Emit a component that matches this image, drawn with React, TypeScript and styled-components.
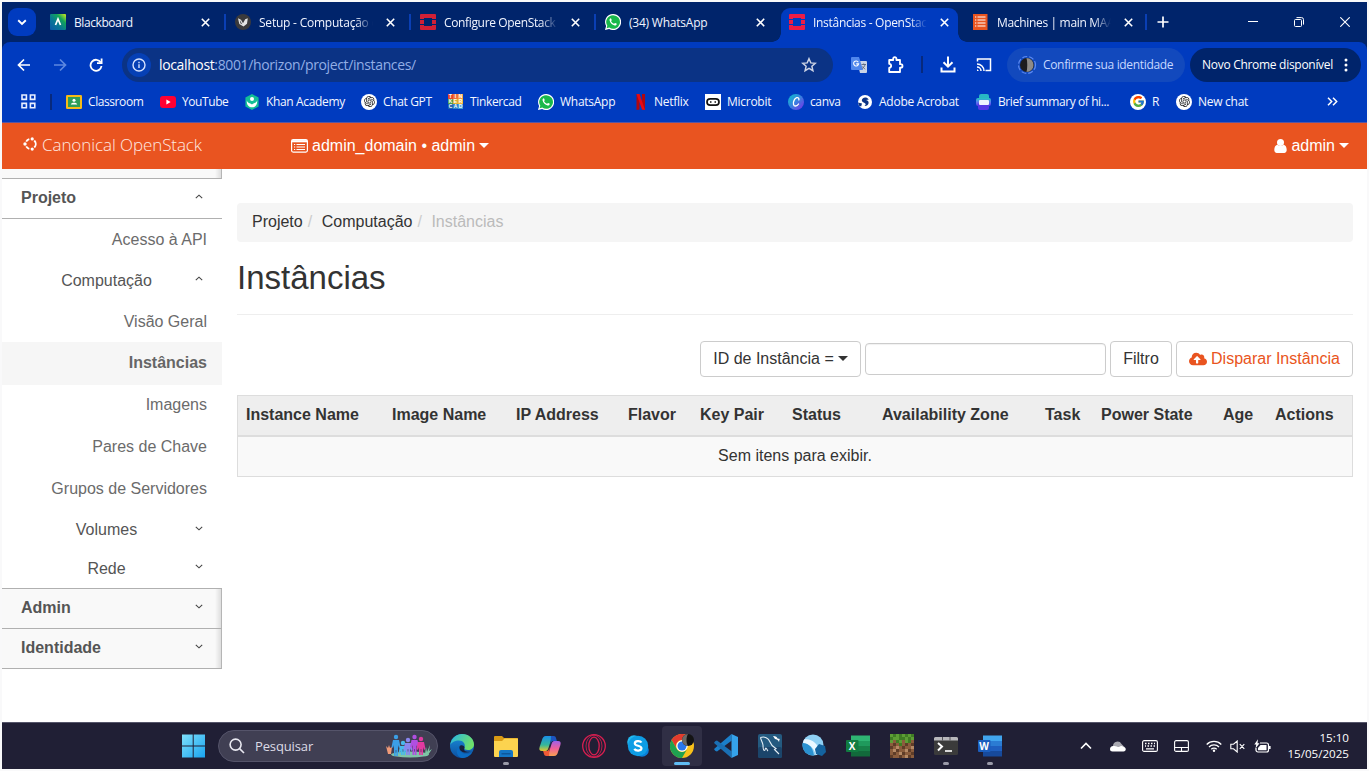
import React from 'react';
import styled, { createGlobalStyle, css } from 'styled-components';
import { RiOpenaiFill } from 'react-icons/ri';
import { FaCloudUploadAlt } from 'react-icons/fa';
import { FcGoogle } from 'react-icons/fc';

const ui = `"Open Sans", "Noto Sans", sans-serif`;
const arial = `"Liberation Sans", Arial, sans-serif`;

const GlobalStyle = createGlobalStyle`
  *, *::before, *::after { box-sizing: border-box; }
  body { margin: 0; background: #f9f9fa; overflow: hidden; }
`;

const Screen = styled.div`
  width: 1369px;
  height: 771px;
  padding: 2px;
  display: flex;
  background: #f9f9fa;
`;

const Desktop = styled.div`
  width: 1365px;
  height: 767px;
  display: flex;
  flex-direction: column;
  background: #fff;
  overflow: hidden;
`;

/* ---------- Browser chrome ---------- */

const TabStrip = styled.div`
  height: 40px;
  flex: none;
  display: flex;
  background: #00246b;
  font: 12px ${ui};
  color: #f1f5ff;
`;

const TabSearch = styled.div`
  width: 28px;
  height: 28px;
  margin: 6px 4px 0 6px;
  padding-left: 7px;
  border-radius: 9px;
  background: #003bbf;
  display: flex;
  align-items: center;
`;

const Tab = styled.div<{ $w: number; $active?: boolean; $line?: boolean }>`
  position: relative;
  width: ${p => p.$w}px;
  height: 34px;
  margin-top: 6px;
  padding: 0 0 6px 10px;
  display: flex;
  align-items: center;
  gap: 8px;
  svg { flex: none; }
  ${p => p.$line && css`
    &::after {
      content: '';
      position: absolute;
      right: -1px;
      top: 6px;
      width: 2px;
      height: 16px;
      background: #0a3fb4;
    }
  `}
  ${p => p.$active && css`
    &::before {
      content: '';
      position: absolute;
      inset: 0 5px 0 2px;
      border-radius: 9px 9px 0 0;
      background: #003bbf;
    }
    & > * { position: relative; }
  `}
`;

const Flare = styled.i<{ $side: 'left' | 'right' }>`
  && { position: absolute; }
  bottom: 0;
  width: 9px;
  height: 9px;
  ${p => p.$side === 'left' ? 'left: -7px;' : 'right: -4px;'}
  background: radial-gradient(circle at ${p => p.$side === 'left' ? '0 0' : '100% 0'}, transparent 8.5px, #003bbf 9px);
`;

const TabTitle = styled.span<{ $fade?: boolean; $track: number }>`
  width: 115px;
  flex: none;
  white-space: nowrap;
  overflow: hidden;
  letter-spacing: ${p => p.$track}px;
  ${p => p.$fade && css`
    mask-image: linear-gradient(90deg, #000 84%, transparent 99%);
  `}
`;

const CloseIcon = styled.svg.attrs({ viewBox: '0 0 9 9', width: 9, height: 9 })`
  margin-left: 4px;
  stroke: #fff;
  stroke-width: 1.6;
`;

const StripButtons = styled.div`
  flex: 1;
  display: flex;
  align-items: center;
  justify-content: space-between;
  padding: 0 17px 0 11px;
`;

const WindowButtons = styled.div`
  display: flex;
  align-items: center;
  gap: 36px;
`;

const Toolbar = styled.div`
  height: 45px;
  flex: none;
  display: flex;
  align-items: center;
  background: #003bbf;
  padding: 0 6px 0 15px;
  border-radius: 8px 8px 0 0;
  font: 12px ${ui};
`;

const ToolbarWrap = styled.div`
  background: #00246b;
  flex: none;
`;

const NavButtons = styled.div`
  width: 105px;
  display: flex;
  align-items: center;
  gap: 22px;
`;

const UrlBar = styled.div`
  width: 711px;
  height: 34px;
  border-radius: 17px;
  background: #0b3385;
  display: flex;
  align-items: center;
  padding: 0 16px 0 5px;
  font-size: 14px;
  color: #92aee6;
  b { font-weight: 400; color: #fff; }
`;

const InfoDot = styled.div`
  width: 24px;
  height: 24px;
  border-radius: 50%;
  background: #0640b5;
  display: grid;
  place-items: center;
  margin-right: 8px;
`;

const UrlText = styled.span`
  flex: 1;
  letter-spacing: -0.37px;
`;

const ToolIcons = styled.div`
  width: 174px;
  padding-left: 18px;
  display: flex;
  align-items: center;
`;

const ToolIcon = styled.span<{ $w: number }>`
  width: ${p => p.$w}px;
  flex: none;
  display: flex;
`;

const ProfilePill = styled.div`
  width: 178px;
  height: 34px;
  border-radius: 17px;
  background: #1249bd;
  color: #c7d8ff;
  display: flex;
  align-items: center;
  gap: 6px;
  padding-left: 10px;
  white-space: nowrap;
  letter-spacing: -0.33px;
`;

const UpdatePill = styled.div`
  width: 171px;
  height: 34px;
  margin-left: 5px;
  border-radius: 17px;
  background: #00246b;
  color: #fff;
  display: flex;
  align-items: center;
  justify-content: space-between;
  padding: 0 13px 0 12px;
  white-space: nowrap;
  letter-spacing: -0.29px;
`;

const BookmarkBar = styled.div`
  height: 36px;
  flex: none;
  background: #003bbf;
  border-bottom: 1px solid #5a55a0;
  display: flex;
  align-items: center;
  padding: 0 0 6px 19px;
  color: #f4f7ff;
  font: 12px ${ui};
`;

const AppsButton = styled.div`
  width: 45px;
  display: flex;
  align-items: center;
  gap: 14px;
`;

const Divider = styled.i<{ $h: number }>`
  width: 2px;
  height: ${p => p.$h}px;
  background: #07297d;
`;

const Bookmark = styled.div<{ $w: number; $track: number }>`
  width: ${p => p.$w}px;
  flex: none;
  display: flex;
  align-items: center;
  gap: 6px;
  white-space: nowrap;
  letter-spacing: ${p => p.$track}px;
  svg { flex: none; }
`;

/* ---------- OpenStack page ---------- */

const NavBar = styled.header`
  height: 46px;
  flex: none;
  background: #e95420;
  color: #fff;
  display: flex;
  align-items: center;
  padding: 0 18px 1px 21px;
  font: 16px ${arial};
`;

const Brand = styled.div`
  width: 268px;
  display: flex;
  align-items: center;
  gap: 4px;
  padding-bottom: 3px;
  color: #ffe9e0;
  font: 300 17px "Open Sans", sans-serif;
  letter-spacing: -0.08px;
`;

const DomainPicker = styled.div`
  flex: 1;
  display: flex;
  align-items: center;
  gap: 4px;
`;

const UserMenu = styled.div`
  display: flex;
  align-items: center;
  gap: 4px;
`;

const Caret = styled.i`
  border: 5px solid transparent;
  border-top-color: currentColor;
  border-bottom: 0;
`;

const Page = styled.div`
  flex: 1;
  display: flex;
  font: 16px ${arial};
  color: #333;
`;

const Sidebar = styled.nav`
  width: 220px;
  flex: none;
  color: #6b6b6b;
`;

const shade = css`
  background: linear-gradient(270deg, #dedede 0, #f9f9f9 6px);
  border-right: 1px solid #b5b5b5;
`;

const SidebarCap = styled.div`
  height: 10px;
  border-bottom: 1px solid #b0b0b0;
  ${shade}
`;

const Section = styled.div<{ $closed?: boolean }>`
  height: 40px;
  display: flex;
  align-items: center;
  justify-content: space-between;
  padding: 0 19px 1px;
  border-bottom: 1px solid #b0b0b0;
  font-weight: 700;
  color: #555;
  svg { margin-bottom: 4px; }
  ${p => p.$closed && shade}
  ${p => p.$closed && 'padding-right: 18px;'}
`;

const ClosedSections = styled.div`
  border-top: 1px solid #b0b0b0;
`;

const Group = styled.div<{ $h: number; $low?: boolean }>`
  height: ${p => p.$h}px;
  display: grid;
  grid-template-columns: 147px 1fr;
  margin-left: 31px;
  padding: ${p => (p.$low ? 2 : 0)}px 19px 0 0;
  align-items: center;
  text-align: center;
  color: #555;
  svg { justify-self: end; margin-bottom: 4px; }
`;

const Leaf = styled.div<{ $h: number; $on?: boolean }>`
  height: ${p => p.$h}px;
  padding-right: 15px;
  display: flex;
  align-items: center;
  justify-content: flex-end;
  ${p => p.$on && css`
    background: #f6f6f6;
    font-weight: 700;
    color: #666;
    padding-bottom: 2px;
  `}
`;

const Main = styled.main`
  width: 1116px;
  margin: 34px 0 0 15px;
`;

const Breadcrumb = styled.div`
  height: 39px;
  border-radius: 4px;
  background: #f5f5f5;
  padding: 0 15px 2px;
  display: flex;
  align-items: center;
  span { color: #bbb; }
`;

const Slash = styled.i`
  font-style: normal;
  color: #ccc;
  width: 19px;
  padding-left: 5px;
`;

const Title = styled.h1`
  margin: 0;
  height: 73px;
  padding-top: 17px;
  border-bottom: 1px solid #eee;
  font-size: 33px;
  line-height: 37px;
  font-weight: 400;
`;

const Actions = styled.div`
  margin-top: 26px;
  height: 36px;
  display: flex;
  justify-content: flex-end;
  align-items: center;
  gap: 4px;
`;

const Button = styled.div<{ $w: number; $primary?: boolean }>`
  width: ${p => p.$w}px;
  height: 36px;
  border: 1px solid #ccc;
  border-radius: 4px;
  background: #fff;
  display: flex;
  align-items: center;
  justify-content: center;
  padding-bottom: 1px;
  gap: 4px;
  color: ${p => (p.$primary ? '#e95420' : '#333')};
  white-space: nowrap;
`;

const Field = styled.input`
  width: 241px;
  height: 32px;
  border: 1px solid #ccc;
  border-radius: 4px;
  background: #fff;
  box-shadow: inset 0 1px 1px rgba(0, 0, 0, 0.06);
`;

const Table = styled.table`
  width: 1116px;
  margin-top: 18px;
  table-layout: fixed;
  border-collapse: separate;
  border-spacing: 0;
  border: 1px solid #ddd;
  th {
    height: 41px;
    padding: 0 0 1px 8px;
    text-align: left;
    white-space: nowrap;
    background: #eee;
    border-bottom: 2px solid #ddd;
  }
  td {
    height: 39px;
    padding: 0 0 2px;
    text-align: center;
    background: #f9f9f9;
  }
`;

/* ---------- Taskbar ---------- */

const Taskbar = styled.footer`
  height: 47px;
  flex: none;
  background: #201f35;
  border-top: 1px solid #55556a;
  display: flex;
  align-items: center;
  padding-left: 179px;
  color: #fff;
  font-family: ${ui};
`;

const StartButton = styled.div`
  width: 37px;
  display: flex;
`;

const SearchBox = styled.div`
  width: 220px;
  height: 32px;
  border-radius: 16px;
  background: #403f53;
  border: 1px solid #55546a;
  display: flex;
  align-items: center;
  padding: 0 5px 0 10px;
  font-size: 13px;
  color: #dcdce6;
  span { flex: 1; padding-left: 10px; letter-spacing: -0.13px; }
`;

const Apps = styled.div`
  display: flex;
  margin-left: 2px;
  flex: 1;
`;

const AppSlot = styled.div<{ $state?: 'open' | 'active' }>`
  position: relative;
  width: 40px;
  height: 40px;
  margin: 0 2px;
  border-radius: 4px;
  display: grid;
  place-items: center;
  ${p => p.$state === 'active' && 'background: #302f45;'}
  ${p => p.$state && css`
    &::after {
      content: '';
      position: absolute;
      bottom: 1px;
      left: 50%;
      transform: translateX(-50%);
      width: ${p.$state === 'active' ? 16 : 6}px;
      height: 3px;
      border-radius: 2px;
      background: ${p.$state === 'active' ? '#60bdf5' : '#9a9aa8'};
    }
  `}
`;

const Tray = styled.div`
  display: flex;
  align-items: center;
  width: 205px;
`;

const TraySlot = styled.span<{ $w: number }>`
  width: ${p => p.$w}px;
  flex: none;
  display: flex;
`;

const Clock = styled.div`
  width: 82px;
  padding-right: 18px;
  font-size: 11.6px;
  line-height: 16px;
  text-align: right;
  white-space: nowrap;
`;

/* ---------- Icons ---------- */

const OpenStackIcon = ({ hot }: { hot?: boolean }) => (
  <svg width="16" height="16" viewBox="0 0 16 16" fill={hot ? '#ed1c46' : '#d22036'}>
    <path d="M1 0h14a1 1 0 0 1 1 1v4h-4V4H4v1H0V1a1 1 0 0 1 1-1zM0 6h4v4H0zM12 6h4v4h-4zM0 11h4v1h8v-1h4v4a1 1 0 0 1-1 1H1a1 1 0 0 1-1-1z" />
  </svg>
);

const BlackboardIcon = () => (
  <svg width="16" height="16" viewBox="0 0 16 16">
    <defs>
      <linearGradient id="bb" x1="1" y1="0" x2="0" y2="1">
        <stop offset="0" stopColor="#d8ec1c" /><stop offset=".3" stopColor="#12a45a" />
        <stop offset=".6" stopColor="#087895" /><stop offset="1" stopColor="#0a58a8" />
      </linearGradient>
    </defs>
    <rect width="16" height="16" rx="1" fill="url(#bb)" />
    <path d="M5.500 11 8 5l2.500 6" fill="none" stroke="#fff" strokeWidth="1.700" />
  </svg>
);

const SetupIcon = () => (
  <svg width="16" height="16" viewBox="0 0 16 16">
    <circle cx="8" cy="8" r="8" fill="#3a3a3c" />
    <path d="M3 4.300 6 5.800l2 3.400 2.200-4 2.600-1-.8 5.500L8.500 12.500 4.300 10z" fill="#e4e4e4" />
    <path d="m4.800 6 .6 3.200 2 1.300z" fill="#3a3a3c" />
  </svg>
);

const WhatsAppIcon = () => (
  <svg width="16" height="16" viewBox="0 0 16 16">
    <path d="M8 0a8 8 0 0 0-6.900 12L0 16l4.100-1.100A8 8 0 1 0 8 0z" fill="#fff" />
    <path d="M8 1.200a6.800 6.800 0 0 0-5.700 10.500l-.7 2.600 2.700-.7A6.800 6.800 0 1 0 8 1.200z" fill="#19b84a" />
    <path d="M5.600 4.200c-.9.4-1.300 1.300-1 2.300.6 2.300 2.600 4.400 5 5 1 .2 1.800-.3 2.100-1.200.1-.4 0-.6-.2-.7l-1.400-.7c-.5-.2-.8.9-1.200.8-1.200-.4-2.200-1.300-2.800-2.500-.1-.4.8-.7.6-1.200l-.6-1.500c-.1-.3-.3-.3-.5-.3z" fill="#fff" />
  </svg>
);

const MaasIcon = () => (
  <svg width="16" height="16" viewBox="0 0 16 16">
    <rect width="14.500" height="16" fill="#e95420" />
    <path d="M2 3h1.300M2 6h1.300M2 9h1.300M2 12h1.300M4.500 3H12.500M4.500 6H12.500M4.500 9H12.500M4.500 12H12.500" stroke="#fff" strokeWidth="1.200" />
  </svg>
);

const ClassroomIcon = () => (
  <svg width="16" height="14" viewBox="0 0 16 14">
    <rect width="16" height="14" rx="1.200" fill="#f6bb18" />
    <rect x="2" y="2" width="12" height="10" fill="#2f9e58" />
    <circle cx="8" cy="5.300" r="1.500" fill="#fff" />
    <path d="M4.800 9.600c0-2.400 6.400-2.400 6.400 0z" fill="#fff" />
  </svg>
);

const YouTubeIcon = () => (
  <svg width="16" height="12" viewBox="0 0 16 12">
    <rect width="16" height="12" rx="3" fill="#ff0033" />
    <path d="m6.400 3.600 4.200 2.400-4.200 2.400z" fill="#fff" />
  </svg>
);

const KhanIcon = () => (
  <svg width="16" height="16" viewBox="0 0 16 16">
    <path d="M8 0l6.600 3.600v8.800L8 16l-6.600-3.600V3.600z" fill="#14bf96" />
    <circle cx="8" cy="5" r="2" fill="#fff" />
    <path d="M2.800 6.500C3.500 9 6 9 8 10.500 10 9 12.500 9 13.200 6.500 13.500 11 11 13.300 8 13.300S2.500 11 2.800 6.500z" fill="#fff" />
  </svg>
);

const RoundBadge = styled.span`
  width: 16px;
  height: 16px;
  border-radius: 50%;
  background: #fff;
  color: #222;
  display: grid;
  place-items: center;
`;

const GptIcon = () => <RoundBadge><RiOpenaiFill size={13} /></RoundBadge>;
const GoogleIcon = () => <RoundBadge><FcGoogle size={13} /></RoundBadge>;

const TinkercadGrid = styled.span`
  width: 16px;
  height: 15px;
  flex: none;
  display: grid;
  grid-template-columns: repeat(3, 5px);
  grid-auto-rows: 5px;
  font: 700 5px/5px ${arial};
  letter-spacing: 0;
  text-align: center;
  color: #fff;
`;

const TinkerCell = styled.i<{ $c: string }>`
  font-style: normal;
  background: ${p => p.$c};
`;

const tinkerCells = [
  ['T', '#e8452c'], ['I', '#f0713a'], ['N', '#f59a3e'],
  ['K', '#4f9e48'], ['E', '#e0b030'], ['R', '#f2b63b'],
  ['C', '#1b5fae'], ['A', '#2c83c9'], ['D', '#3a9ad8'],
];

const TinkercadIcon = () => (
  <TinkercadGrid>
    {tinkerCells.map(([l, c]) => <TinkerCell key={l} $c={c}>{l}</TinkerCell>)}
  </TinkercadGrid>
);

const NetflixIcon = () => (
  <svg width="16" height="16" viewBox="0 0 16 16">
    <path d="M4.500 0h3v15.500l-3 .5zM10 0h3v16l-3-.5z" fill="#b00710" />
    <path d="M4.500 0h3L13 16l-3-.5z" fill="#e50914" />
  </svg>
);

const MicrobitIcon = () => (
  <svg width="16" height="16" viewBox="0 0 16 16">
    <rect width="16" height="16" fill="#fff" />
    <rect x="2" y="4.800" width="12" height="6.400" rx="3.200" fill="none" stroke="#111" strokeWidth="1.700" />
    <path d="M5 8h1.500M9.500 8H11" stroke="#111" strokeWidth="1.500" />
  </svg>
);

const CanvaIcon = () => (
  <svg width="16" height="16" viewBox="0 0 16 16">
    <defs>
      <linearGradient id="cv" x1="0" y1="0" x2="1" y2="1">
        <stop offset="0" stopColor="#06c4cc" /><stop offset=".5" stopColor="#3b7fe0" /><stop offset="1" stopColor="#7d2ae8" />
      </linearGradient>
    </defs>
    <circle cx="8" cy="8" r="8" fill="url(#cv)" />
    <path d="M10.800 5.900c.6-1.500-.6-2.600-2-2.200-2.300.7-3.900 4.200-3.300 6.600.5 2.300 3.300 2.300 5.100-.3" fill="none" stroke="#fff" strokeWidth="1.300" strokeLinecap="round" />
  </svg>
);

const AcrobatIcon = () => (
  <svg width="16" height="14" viewBox="-1 0 16 14">
    <circle cx="7" cy="7" r="7" fill="#fff" />
    <path d="M5 3.200C6.500 2 9.500 2.300 10.800 4.600L8 5c2 .4 3 1.800 2.500 3.400-.5 1.700-2 2.800-4 2.500 1.200-.9 1.500-1.800.7-2.500C6 7.400 4 7.200 3.800 5.500c0-1 .4-1.800 1.200-2.300z" fill="#0b3385" />
    <path d="M0 7.500 4 8.500 3.200 11.500 1 10.700z" fill="#0b3385" />
  </svg>
);

const BriefIcon = () => (
  <svg width="16" height="16" viewBox="0 0 16 16">
    <defs>
      <linearGradient id="bf" x1="0" y1="0" x2="0" y2="1">
        <stop offset="0" stopColor="#22c7c0" /><stop offset=".5" stopColor="#5a7cf0" /><stop offset="1" stopColor="#5a35e8" />
      </linearGradient>
    </defs>
    <rect x="3" width="10" height="8" rx="2" fill="#28b8c4" />
    <rect x="0" y="4" width="15" height="8" rx="2" fill="url(#bf)" />
    <rect x="2" y="9" width="11" height="7" rx="2" fill="#5438e6" />
    <rect x="3" y="6" width="10" height="5" rx="1" fill="#eef2ff" />
  </svg>
);

const Chevron = ({ up }: { up?: boolean }) => (
  <svg width="8" height="5" viewBox="0 0 8 5" fill="none" stroke="#444" strokeWidth="1.100">
    <path d={up ? 'M.8 4.200 4 1.200l3.200 3' : 'M.8 .8 4 3.800l3.200-3'} />
  </svg>
);

const PuzzleIcon = () => (
  <svg width="17" height="18" viewBox="0 0 17 18" fill="none" stroke="#fff" strokeWidth="1.800">
    <path d="M1.200 4h4V2.800a1.600 1.600 0 0 1 3.200 0V4H12v4.200h.8a1.700 1.700 0 0 1 0 3.400H12V16H1.200v-4c2.600-.3 2.600-4 0-4.200z" strokeLinejoin="round" />
  </svg>
);

const TranslateIcon = () => (
  <svg width="16" height="16" viewBox="0 0 16 16">
    <path d="M6 4h9a1 1 0 0 1 1 1v10a1 1 0 0 1-1 1H9z" fill="#c9d3e6" />
    <path d="M0 1a1 1 0 0 1 1-1h7l4 13H1a1 1 0 0 1-1-1z" fill="#4f86ec" />
    <path d="M7.300 5.200a2.500 2.500 0 1 0 .3 1.700H5.200" fill="none" stroke="#fff" strokeWidth="1.100" />
    <path d="M10.500 7.500H15M12.700 6.500v1M14 7.500c-.3 2-1.700 3.300-3 4M11.500 9.500l2.500 2.800" fill="none" stroke="#59657c" strokeWidth=".9" />
  </svg>
);

const MoonAvatar = () => (
  <svg width="20" height="20" viewBox="0 0 20 20">
    <circle cx="10" cy="10" r="8.500" fill="none" stroke="#5d8af0" strokeWidth="1.200" strokeDasharray="5 2" />
    <circle cx="10" cy="10" r="7" fill="#1c1c1e" />
    <path d="M9.500 3a7 7 0 0 1 0 14c1-4 1-10 0-14z" fill="#8d8b88" />
  </svg>
);

const UserIcon = () => (
  <svg width="13" height="14" viewBox="0 0 13 14" fill="#fff">
    <circle cx="6.500" cy="3.600" r="3.500" />
    <path d="M3.300 5.800C1.200 6.200.3 8.500.3 11c0 1.800 1 2.900 2.500 2.900h7.400c1.500 0 2.500-1.100 2.500-2.900 0-2.500-.9-4.800-3-5.200a4.600 4.600 0 0 1-6.400 0z" />
  </svg>
);

const EdgeIcon = () => (
  <svg width="24" height="24" viewBox="0 0 24 24">
    <defs>
      <linearGradient id="e1" x1="0" y1="0" x2="1" y2=".4"><stop offset="0" stopColor="#26b5e8" /><stop offset="1" stopColor="#6fe06a" /></linearGradient>
      <linearGradient id="e2" x1="0" y1="0" x2="0" y2="1"><stop offset="0" stopColor="#1b8fdc" /><stop offset="1" stopColor="#0c4fa0" /></linearGradient>
    </defs>
    <circle cx="12" cy="12" r="12" fill="url(#e2)" />
    <path d="M.2 11C1.500 3.500 7 0 12 0c7 0 12 5 12 10.500 0 3.500-3 5.500-6 5.500-2.500 0-4-1-3.500-2C16 10 13 6.500 9 6.500 5 6.500 1.500 8.500.2 11z" fill="url(#e1)" />
    <path d="M9.500 12c-2 6 5 10 12.500 6.500C19.500 22.500 15.500 24 12 24 6 22.500 5 15 9.500 12z" fill="#0b6cc4" />
    <path d="M9.500 12.500C8.500 17 14 20.500 21.500 17.500 17 18.500 12.500 17 14.500 14c.5-2-3.500-4-5-1.500z" fill="#17203c" />
  </svg>
);

const FolderIcon = () => (
  <svg width="24" height="24" viewBox="0 0 24 24">
    <path d="M0 3a1 1 0 0 1 1-1h7l2 2h13a1 1 0 0 1 1 1v3H0z" fill="#d99a14" />
    <path d="M0 7h8l2.500-2.500H24V22a1 1 0 0 1-1 1H1a1 1 0 0 1-1-1z" fill="#fcd34f" />
    <path d="M5 23v-5a2 2 0 0 1 2-2h10a2 2 0 0 1 2 2v5z" fill="#1476c6" />
    <path d="M7.500 19h9v1.500h-9z" fill="#0d579c" />
  </svg>
);

const CopilotIcon = () => (
  <svg width="24" height="24" viewBox="0 0 24 24">
    <defs>
      <linearGradient id="cp1" x1="0" y1="0" x2="0" y2="1"><stop offset="0" stopColor="#1a8fe8" /><stop offset=".6" stopColor="#35b89a" /><stop offset="1" stopColor="#e8c62c" /></linearGradient>
      <linearGradient id="cp2" x1="0" y1="0" x2="0" y2="1"><stop offset="0" stopColor="#a060e8" /><stop offset=".5" stopColor="#f0609a" /><stop offset="1" stopColor="#f8a050" /></linearGradient>
    </defs>
    <path d="M14 2H8C5.500 2 4.500 4 4 6L1.600 13c-.8 2.500 0 4 2.400 4h3.500c2 0 2.500-1.500 3-3L13 6c.4-1.500 1-2 2.500-2z" fill="url(#cp1)" />
    <path d="M10 22h6c2.500 0 3.500-2 4-4l2.400-7c.8-2.500 0-4-2.400-4h-3.500c-2 0-2.500 1.500-3 3L11 18c-.4 1.500-1 2-2.500 2z" fill="url(#cp2)" />
    <path d="M13 2h2.500c2 0 2.300 1.300 2.800 3l.6 2h-3.200C13 7 13.200 9 12.400 11z" fill="#1c55c0" />
    <path d="M11 22H8.500c-2 0-2.300-1.300-2.800-3l-.6-2h3.200c2.700 0 2.500-2 3.300-4z" fill="#f05a35" />
  </svg>
);

const OperaIcon = () => (
  <svg width="24" height="24" viewBox="0 0 24 24" fill="none" stroke="#d81e50" strokeWidth="1.300">
    <circle cx="12" cy="12" r="11.300" />
    <ellipse cx="12" cy="12" rx="8" ry="10.800" strokeWidth=".8" />
    <ellipse cx="12" cy="12" rx="5.200" ry="8.800" />
  </svg>
);

const SkypeIcon = () => (
  <svg width="24" height="24" viewBox="0 0 24 24">
    <circle cx="8" cy="8" r="6.800" fill="#22b8f0" /><circle cx="16" cy="16" r="6.800" fill="#0a7fd8" />
    <circle cx="12" cy="12" r="10.200" fill="#0e9de5" />
    <path d="M15.500 8.500C14 6.300 8.800 6.700 8.800 9.400c0 3 6.700 1.700 6.700 4.800 0 2.800-5.600 3.200-7.200.7" fill="none" stroke="#fff" strokeWidth="2.200" />
  </svg>
);

const ChromeIcon = () => (
  <svg width="24" height="24" viewBox="0 0 24 24">
    <circle cx="12" cy="12" r="12" fill="#f9c21a" />
    <path d="M1.600 6A12 12 0 0 1 22.400 6H12a6 6 0 0 0-5.200 9z" fill="#e33b2e" />
    <path d="M1.600 6A12 12 0 0 0 12 24l5.200-9a6 6 0 0 1-10.400 0z" fill="#1fa250" />
    <circle cx="12" cy="12" r="5.700" fill="#fff" /><circle cx="12" cy="12" r="4.500" fill="#2b78ec" />
    <circle cx="18" cy="6" r="6" fill="#141414" />
    <path d="M18 0a6 6 0 0 0 0 12c-2-3-2-9 0-12z" fill="#6d6a66" />
  </svg>
);

const VsCodeIcon = () => (
  <svg width="24" height="24" viewBox="0 0 24 24">
    <path d="M17.500 0v6.800L3 17.600 1.500 17 .3 15.800v-1z" fill="#1b7fca" />
    <path d="M17.500 24v-6.800L3 6.400 1.500 7 .3 8.200v1z" fill="#1a6fb4" />
    <path d="M17.500 0 24 3v18l-6.500 3z" fill="#35a2ea" />
  </svg>
);

const MySqlIcon = () => (
  <svg width="24" height="24" viewBox="0 0 24 24">
    <rect width="24" height="24" rx="2" fill="#245a80" /><rect y="13" width="24" height="11" rx="2" fill="#1b456b" />
    <path d="M2.500 3.500c4-1.500 8 .5 9.500 4.500 1.500 4 3 4.500 6 6.500l-1.500 1 4.500 4.500M2.500 3.500c.5 3 2 4.500 2.500 7.500 0 3 .5 5.500 1.500 5.500s.5-2.500 1.300-2.500c1 0 1.200 2 2.200 3" fill="none" stroke="#e4eef5" strokeWidth="1.100" />
    <path d="M15 2c3 0 4 1 4.500 2.500L22 5c-1 .5-.5 2-1 3-.5-2-3-3-4-3z" fill="#fff" />
  </svg>
);

const OrbIcon = () => (
  <svg width="24" height="24" viewBox="0 0 24 24">
    <circle cx="11" cy="11" r="10.500" fill="#8fd0f4" />
    <path d="M.6 9C4 8 10 10 12 21.500A10.500 10.500 0 0 1 .6 9z" fill="#2b91d0" />
    <path d="M2 5.500C9 4 16 9 18 18l-4 3C12 14 7 9.500 1 9z" fill="#eaf7ff" />
    <path d="m17 10 6 2 1 6-4 4-6-2-1-5z" fill="#14639f" />
  </svg>
);

const OfficeIcon = ({ letter, tones }: { letter: string; tones: string[] }) => (
  <svg width="24" height="24" viewBox="0 0 24 24">
    <rect x="5" y="1.500" width="19" height="5.500" fill={tones[0]} /><rect x="5" y="7" width="19" height="5" fill={tones[1]} />
    <rect x="5" y="12" width="19" height="5" fill={tones[2]} /><rect x="5" y="17" width="19" height="5.500" fill={tones[3]} />
    <rect y="6" width="12.500" height="12" rx="1" fill={tones[4]} />
    <text x="6.200" y="15.700" textAnchor="middle" fill="#fff" fontFamily="Open Sans" fontWeight="700" fontSize="10">{letter}</text>
  </svg>
);

const blocks = [
  'gGgGgGgG', 'GggGGgGg', 'gbGgbgGb', 'bdbGbdbd', 'dbsbdbbs', 'bsdbbsdb', 'bdbsdbbd', 'dbbdbsdb',
];
const blockTone: Record<string, string> = { g: '#5d9e35', G: '#3f7d24', b: '#8b5d3d', d: '#5f3d28', s: '#b58a66' };

const MinecraftIcon = () => (
  <svg width="24" height="24" viewBox="0 0 8 8" shapeRendering="crispEdges">
    {blocks.flatMap((row, y) => [...row].map((c, x) => (
      <rect key={`${x}-${y}`} x={x} y={y} width="1" height="1" fill={blockTone[c]} />
    )))}
  </svg>
);

const TerminalIcon = () => (
  <svg width="24" height="24" viewBox="0 0 24 24">
    <rect y="3" width="24" height="18" rx="1.500" fill="#3b3b3b" />
    <path d="M0 4.500A1.500 1.500 0 0 1 1.500 3h21A1.500 1.500 0 0 1 24 4.500V6.500H0z" fill="#b8b8bc" />
    <path d="M8.500 3v3.500M16 3v3.500" stroke="#55555a" />
    <path d="m4 9 4 3.500-4 4" fill="none" stroke="#fff" strokeWidth="2" /><path d="M11 17h7" stroke="#fff" strokeWidth="1.600" />
  </svg>
);

const people: [number, number, string, number][] = [
  [11, 3, '#3c9fe6', 19], [18, 9, '#48b9ea', 12], [23, 6, '#8a86ee', 15], [29.5, 3, '#b04fe0', 18], [36, 5, '#e03aa0', 16],
];

const PeopleArt = () => (
  <svg width="47" height="24" viewBox="0 0 47 24">
    <ellipse cx="25" cy="20.500" rx="19" ry="3" fill="#7fc4a8" />
    {people.map(([x, y, c, h]) => (
      <g key={x} fill={c}>
        <circle cx={x} cy={y} r="2.200" />
        <path d={`M${x - 3} ${y + 3}h6l1.500 7-1.500 1-1-3v${h - 8}h-1.700v-6h-.6v6H${x - 2}v-${h - 8}l-1 3-1.500-1z`} />
      </g>
    ))}
    <path d="m1 12 2 2 1-3 1 3 2-1-1 7H3z" fill="#f09a78" />
    <path d="m40 20 1-7 1 5 3-7-1 6 3-2-4 6z" fill="#7cc7a4" />
  </svg>
);

const bookmarks = [
  { label: 'Classroom', icon: <ClassroomIcon />, w: 94, track: -0.42 },
  { label: 'YouTube', icon: <YouTubeIcon />, w: 84, track: -0.42 },
  { label: 'Khan Academy', icon: <KhanIcon />, w: 117, track: -0.35 },
  { label: 'Chat GPT', icon: <GptIcon />, w: 87, track: -0.35 },
  { label: 'Tinkercad', icon: <TinkercadIcon />, w: 90, track: -0.35 },
  { label: 'WhatsApp', icon: <WhatsAppIcon />, w: 94, track: -0.27 },
  { label: 'Netflix', icon: <NetflixIcon />, w: 73, track: -0.27 },
  { label: 'Microbit', icon: <MicrobitIcon />, w: 83, track: -0.27 },
  { label: 'canva', icon: <CanvaIcon />, w: 69, track: -0.38 },
  { label: 'Adobe Acrobat', icon: <AcrobatIcon />, w: 119, track: -0.25 },
  { label: 'Brief summary of hi...', icon: <BriefIcon />, w: 154, track: -0.4 },
  { label: 'R', icon: <GoogleIcon />, w: 46, track: 0 },
  { label: 'New chat', icon: <GptIcon />, w: 151, track: -0.27 },
];

const columns: [string, number][] = [
  ['Instance Name', 146], ['Image Name', 124], ['IP Address', 112], ['Flavor', 72], ['Key Pair', 92], ['Status', 90],
  ['Availability Zone', 163], ['Task', 56], ['Power State', 122], ['Age', 52], ['Actions', 85],
];

const Close = () => <CloseIcon><path d="m.8.8 7.400 7.400M8.200.8.8 8.200" /></CloseIcon>;

export default function App() {
  return (
    <Screen>
      <GlobalStyle />
      <Desktop>
        <TabStrip>
          <TabSearch>
            <svg width="14" height="14" viewBox="0 0 14 14" fill="none" stroke="#fff" strokeWidth="1.900"><path d="m3.200 5.200 3.800 3.700 3.800-3.700" /></svg>
          </TabSearch>
          <Tab $w={185} $line><BlackboardIcon /><TabTitle $track={-0.42}>Blackboard</TabTitle><Close /></Tab>
          <Tab $w={185} $line><SetupIcon /><TabTitle $fade $track={-0.22}>Setup - Computação e</TabTitle><Close /></Tab>
          <Tab $w={185} $line><OpenStackIcon /><TabTitle $fade $track={-0.35}>Configure OpenStack</TabTitle><Close /></Tab>
          <Tab $w={184}><WhatsAppIcon /><TabTitle $track={-0.22}>(34) WhatsApp</TabTitle><Close /></Tab>
          <Tab $w={184} $active>
            <Flare $side="left" /><Flare $side="right" />
            <OpenStackIcon hot /><TabTitle $fade $track={-0.3}>Instâncias - OpenStack</TabTitle><Close />
          </Tab>
          <Tab $w={183} $line><MaasIcon /><TabTitle $fade $track={-0.33}>Machines | main MAAS</TabTitle><Close /></Tab>
          <StripButtons>
            <svg width="12" height="12" viewBox="0 0 12 12" stroke="#fff" strokeWidth="1.700"><path d="M6 .5v11M.5 6h11" /></svg>
            <WindowButtons>
              <svg width="10" height="10" viewBox="0 0 10 10" stroke="#fff"><path d="M0 4.500h10" /></svg>
              <svg width="10" height="10" viewBox="0 0 10 10" fill="none" stroke="#fff"><rect x=".5" y="2.500" width="7" height="7" rx="1" /><path d="M2.500.6h5a2 2 0 0 1 2 2v5" /></svg>
              <svg width="10" height="10" viewBox="0 0 10 10" stroke="#fff" strokeWidth="1.100"><path d="m.3.3 9.400 9.400M9.700.3.3 9.700" /></svg>
            </WindowButtons>
          </StripButtons>
        </TabStrip>

        <ToolbarWrap>
          <Toolbar>
            <NavButtons>
              <svg width="14" height="14" viewBox="0 0 14 14" fill="none" stroke="#fff" strokeWidth="1.700"><path d="M13 7H2M7 1.500 1.500 7 7 12.500" /></svg>
              <svg width="14" height="14" viewBox="0 0 14 14" fill="none" stroke="#5d88e0" strokeWidth="1.700"><path d="M1 7h11M7 1.500 12.500 7 7 12.500" /></svg>
              <svg width="14" height="14" viewBox="0 0 14 14" fill="none" stroke="#fff" strokeWidth="1.800"><path d="M11.800 4.500a5.500 5.500 0 1 0 .7 3.500" /><path d="M12.600.5v4.700H8" /></svg>
            </NavButtons>
            <UrlBar>
              <InfoDot>
                <svg width="14" height="14" viewBox="0 0 14 14" fill="none" stroke="#d6e2ff" strokeWidth="1.400"><circle cx="7" cy="7" r="6" /><path d="M7 6.300V10M7 3.700v1.500" /></svg>
              </InfoDot>
              <UrlText><b>localhost</b>:8001/horizon/project/instances/</UrlText>
              <svg width="16" height="16" viewBox="0 0 16 16" fill="none" stroke="#ccd3e4" strokeWidth="1.500"><path d="m8 1.700 1.800 4.200 4.500.4-3.400 3 1 4.400L8 11.400l-3.900 2.300 1-4.400-3.400-3 4.500-.4z" /></svg>
            </UrlBar>
            <ToolIcons>
              <ToolIcon $w={37}><TranslateIcon /></ToolIcon>
              <ToolIcon $w={33}><PuzzleIcon /></ToolIcon>
              <ToolIcon $w={19}><Divider $h={17} /></ToolIcon>
              <ToolIcon $w={36}>
                <svg width="16" height="17" viewBox="0 0 16 17" fill="none" stroke="#fff" strokeWidth="2"><path d="M8 .5v10M3.500 6.200 8 10.700l4.500-4.500M1.500 11.500v4h13v-4" /></svg>
              </ToolIcon>
              <svg width="16" height="14" viewBox="0 0 16 14" fill="none" stroke="#fff" strokeWidth="1.500"><path d="M1.500 3.500V1h13v11.500H9.500M1 6a7 7 0 0 1 7 7M1 9a4 4 0 0 1 4 4" /><path d="M1 11v2h2z" fill="#fff" stroke="none" /></svg>
            </ToolIcons>
            <ProfilePill><MoonAvatar />Confirme sua identidade</ProfilePill>
            <UpdatePill>
              Novo Chrome disponível
              <svg width="4" height="14" viewBox="0 0 4 14" fill="#fff"><circle cx="2" cy="2" r="1.500" /><circle cx="2" cy="7" r="1.500" /><circle cx="2" cy="12" r="1.500" /></svg>
            </UpdatePill>
          </Toolbar>
        </ToolbarWrap>

        <BookmarkBar>
          <AppsButton>
            <svg width="15" height="15" viewBox="0 0 15 15" fill="none" stroke="#e8efff" strokeWidth="1.600"><path d="M1 1h4.400v4.400H1zM9.400 1h4.400v4.400H9.400zM1 9.400h4.400v4.400H1zM9.400 9.400h4.400v4.400H9.400z" /></svg>
            <Divider $h={16} />
          </AppsButton>
          {bookmarks.map(b => <Bookmark key={b.label} $w={b.w} $track={b.track}>{b.icon}{b.label}</Bookmark>)}
          <svg width="11" height="9" viewBox="0 0 11 9" fill="none" stroke="#fff" strokeWidth="1.500"><path d="m1 .8 3.700 3.700L1 8.200M6 .8l3.700 3.700L6 8.200" /></svg>
        </BookmarkBar>

        <NavBar>
          <Brand>
            <svg width="15" height="14" viewBox="0 0 15 14" fill="none" stroke="#fff" strokeWidth="1.900">
              <path d="M3.200 4.600A5 5 0 0 1 6.300 2.200M11.300 3.500a5 5 0 0 1 0 7M6.300 11.800a5 5 0 0 1-3.100-2.400" />
              <circle cx="2" cy="7" r="1.700" fill="#fff" stroke="none" /><circle cx="9.200" cy="1.900" r="1.600" fill="#fff" stroke="none" /><circle cx="9.200" cy="12.100" r="1.600" fill="#fff" stroke="none" />
            </svg>
            Canonical OpenStack
          </Brand>
          <DomainPicker>
            <svg width="17" height="14" viewBox="0 0 17 14" fill="none" stroke="#fff"><rect x=".6" y=".6" width="15.800" height="12.500" rx="1.500" strokeWidth="1.200" /><path d="M1 2.200h15" strokeWidth="2.200" /><path d="M3 5.500h1.200M3 8h1.200M3 10.500h1.200M5.500 5.500H14M5.500 8H14M5.500 10.500H14" strokeWidth="1.200" /></svg>
            admin_domain • admin
            <Caret />
          </DomainPicker>
          <UserMenu><UserIcon />admin<Caret /></UserMenu>
        </NavBar>

        <Page>
          <Sidebar>
            <SidebarCap />
            <Section>Projeto<Chevron up /></Section>
            <Leaf $h={41}>Acesso à API</Leaf>
            <Group $h={41}>Computação<Chevron up /></Group>
            <Leaf $h={41}>Visão Geral</Leaf>
            <Leaf $h={43} $on>Instâncias</Leaf>
            <Leaf $h={40}>Imagens</Leaf>
            <Leaf $h={43}>Pares de Chave</Leaf>
            <Leaf $h={41}>Grupos de Servidores</Leaf>
            <Group $h={40} $low>Volumes<Chevron /></Group>
            <Group $h={39}>Rede<Chevron /></Group>
            <ClosedSections>
              <Section $closed>Admin<Chevron /></Section>
              <Section $closed>Identidade<Chevron /></Section>
            </ClosedSections>
          </Sidebar>
          <Main>
            <Breadcrumb>Projeto<Slash>/</Slash>Computação<Slash>/</Slash><span>Instâncias</span></Breadcrumb>
            <Title>Instâncias</Title>
            <Actions>
              <Button $w={161}>ID de Instância = <Caret /></Button>
              <Field aria-label="Filtro" />
              <Button $w={62}>Filtro</Button>
              <Button $w={177} $primary><FaCloudUploadAlt size={18} />Disparar Instância</Button>
            </Actions>
            <Table>
              <colgroup>{columns.map(([name, w]) => <col key={name} width={w} />)}</colgroup>
              <thead><tr>{columns.map(([name]) => <th key={name}>{name}</th>)}</tr></thead>
              <tbody><tr><td colSpan={columns.length}>Sem itens para exibir.</td></tr></tbody>
            </Table>
          </Main>
        </Page>

        <Taskbar>
          <StartButton>
            <svg width="24" height="24" viewBox="0 0 24 24">
              <defs><linearGradient id="win" x1="0" y1="0" x2="1" y2="1"><stop offset="0" stopColor="#7fe0fb" /><stop offset="1" stopColor="#18a3ef" /></linearGradient></defs>
              <path d="M1 .5h10.700v11H1zM12.700.5H24v11H12.700zM1 12.500h10.700V23.500H1zM12.700 12.500H24V23.500H12.700z" fill="url(#win)" />
            </svg>
          </StartButton>
          <SearchBox>
            <svg width="16" height="16" viewBox="0 0 16 16" fill="none" stroke="#e8e8f0" strokeWidth="1.600"><circle cx="6.600" cy="6.600" r="5.500" /><path d="m10.600 10.600 4.400 4.400" /></svg>
            <span>Pesquisar</span>
            <PeopleArt />
          </SearchBox>
          <Apps>
            <AppSlot><EdgeIcon /></AppSlot>
            <AppSlot $state="open"><FolderIcon /></AppSlot>
            <AppSlot><CopilotIcon /></AppSlot>
            <AppSlot><OperaIcon /></AppSlot>
            <AppSlot><SkypeIcon /></AppSlot>
            <AppSlot $state="active"><ChromeIcon /></AppSlot>
            <AppSlot><VsCodeIcon /></AppSlot>
            <AppSlot><MySqlIcon /></AppSlot>
            <AppSlot><OrbIcon /></AppSlot>
            <AppSlot><OfficeIcon letter="X" tones={['#2fb573', '#1f9a5c', '#178048', '#12693b', '#107c41']} /></AppSlot>
            <AppSlot><MinecraftIcon /></AppSlot>
            <AppSlot $state="open"><TerminalIcon /></AppSlot>
            <AppSlot $state="open"><OfficeIcon letter="W" tones={['#41a5ee', '#2b7cd3', '#1f5fbf', '#174a9c', '#1b5ebe']} /></AppSlot>
          </Apps>
          <Tray>
            <TraySlot $w={30}><svg width="12" height="8" viewBox="0 0 12 8" fill="none" stroke="#fff" strokeWidth="1.600"><path d="m1 6.500 5-5 5 5" /></svg></TraySlot>
            <TraySlot $w={32}><svg width="16" height="11" viewBox="0 0 16 11"><path d="M3 5a4.500 4.500 0 0 1 8.500-2L15 6.500 8 9z" fill="#a8a8b0" /><path d="M0 8a3 3 0 0 1 3.500-3C6 4.500 8 6.500 9 6c2-1.500 3.500-1 4.500 0 3 0 3 4.500 0 4.500H2.500A2.500 2.500 0 0 1 0 8z" fill="#fff" /></svg></TraySlot>
            <TraySlot $w={32}><svg width="16" height="12" viewBox="0 0 16 12" fill="none" stroke="#fff" strokeWidth="1.100"><rect x=".6" y=".6" width="14.800" height="10.800" rx="1.500" /><path d="M3 3.500h1.500M6 3.500h1.500M9 3.500h1.500M12 3.500h1M3 6h1M5.500 6H7M8.500 6H10M11.500 6H13M4 8.800h8" strokeWidth="1.300" /></svg></TraySlot>
            <TraySlot $w={32}><svg width="15" height="12" viewBox="0 0 15 12" fill="none" stroke="#fff" strokeWidth="1.100"><rect x=".6" y=".6" width="13.800" height="10.800" rx="1.500" /><path d="M.6 7.500h13.800M7.500 7.500v4" /></svg></TraySlot>
            <TraySlot $w={24}><svg width="16" height="12" viewBox="0 0 16 12" fill="none" stroke="#fff" strokeWidth="1.300"><path d="M.7 4.500a10.300 10.300 0 0 1 14.600 0M3 7a7 7 0 0 1 10 0M5.300 9.300a3.800 3.800 0 0 1 5.400 0" /><circle cx="8" cy="10.800" r="1.200" fill="#fff" stroke="none" /></svg></TraySlot>
            <TraySlot $w={24}><svg width="16" height="13" viewBox="0 0 16 13" fill="none" stroke="#fff" strokeWidth="1.100"><path d="M.8 4.200h2.700L7.200 1v11L3.500 8.800H.8zM9.800 4.200l4.500 4.600M14.300 4.200 9.800 8.800" /></svg></TraySlot>
            <TraySlot $w={31}><svg width="17" height="15" viewBox="0 0 17 15" fill="none" stroke="#fff" strokeWidth="1.200"><path d="M6 4h6.500a2 2 0 0 1 2 2v5a2 2 0 0 1-2 2H4a2 2 0 0 1-2-2V9" /><path d="M6.500 6H12.500v5.200H4V9z" fill="#fff" stroke="none" /><path d="M15.800 7v3" strokeWidth="1.600" /><path d="M4 .2.300 5.500h2L1.500 9.500 5.500 4.200h-2z" fill="#fff" stroke="none" /></svg></TraySlot>
          </Tray>
          <Clock>15:10<br />15/05/2025</Clock>
        </Taskbar>
      </Desktop>
    </Screen>
  );
}
